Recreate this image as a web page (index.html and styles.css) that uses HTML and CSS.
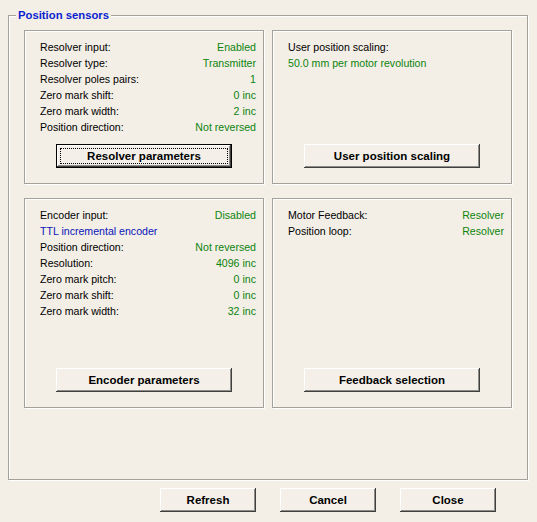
FILE: index.html
```html
<!DOCTYPE html>
<html lang="en">
<head>
    <meta charset="UTF-8">
    <meta name="viewport" content="width=device-width, initial-scale=1.0">
    <title>Position sensors</title>
    <link rel="stylesheet" href="styles.css">
</head>
<body>
    <div class="dialog">
        <div class="group">
            <span class="group-title">Position sensors</span>
            <div class="panels">
                <!-- Resolver -->
                <div class="panel">
                    <div class="row"><span>Resolver input:</span><span class="val">Enabled</span></div>
                    <div class="row"><span>Resolver type:</span><span class="val">Transmitter</span></div>
                    <div class="row"><span>Resolver poles pairs:</span><span class="val">1</span></div>
                    <div class="row"><span>Zero mark shift:</span><span class="val">0 inc</span></div>
                    <div class="row"><span>Zero mark width:</span><span class="val">2 inc</span></div>
                    <div class="row"><span>Position direction:</span><span class="val">Not reversed</span></div>
                    <button class="btn btn-wide btn-default">Resolver parameters</button>
                </div>

                <!-- User scaling -->
                <div class="panel">
                    <div class="row"><span>User position scaling:</span></div>
                    <div class="row"><span class="val">50.0 mm per motor revolution</span></div>
                    <button class="btn btn-wide">User position scaling</button>
                </div>

                <!-- Encoder -->
                <div class="panel">
                    <div class="row"><span>Encoder input:</span><span class="val">Disabled</span></div>
                    <div class="row"><span class="info">TTL incremental encoder</span></div>
                    <div class="row"><span>Position direction:</span><span class="val">Not reversed</span></div>
                    <div class="row"><span>Resolution:</span><span class="val">4096 inc</span></div>
                    <div class="row"><span>Zero mark pitch:</span><span class="val">0 inc</span></div>
                    <div class="row"><span>Zero mark shift:</span><span class="val">0 inc</span></div>
                    <div class="row"><span>Zero mark width:</span><span class="val">32 inc</span></div>
                    <button class="btn btn-wide">Encoder parameters</button>
                </div>

                <!-- Feedback -->
                <div class="panel">
                    <div class="row"><span>Motor Feedback:</span><span class="val">Resolver</span></div>
                    <div class="row"><span>Position loop:</span><span class="val">Resolver</span></div>
                    <button class="btn btn-wide">Feedback selection</button>
                </div>
            </div>
        </div>

        <div class="actions">
            <button class="btn">Refresh</button>
            <button class="btn">Cancel</button>
            <button class="btn">Close</button>
        </div>
    </div>
</body>
</html>
```

FILE: styles.css
```css
body {
    margin: 0;
    background-color: #f3eee6;
    font-family: "Liberation Sans", Arial, sans-serif;
    font-size: 10.6px;
    color: #000;
}
.dialog {
    padding: 15px 0 0 8px;
}
.group {
    position: relative;
    width: 520px;
    height: 465px;
    box-sizing: border-box;
    padding: 14px 15px 0 15px;
    border: 1px solid #a3a199;
    box-shadow: 1px 1px 0 #fff, inset 1px 1px 0 #fff;
}
.group-title {
    position: absolute;
    top: -8px;
    left: 7px;
    padding: 0 2px;
    line-height: 14px;
    background-color: #f3eee6;
    color: #0a1ecf;
    font-weight: bold;
    font-size: 11.3px;
}
.panels {
    display: grid;
    grid-template-columns: 240px 240px;
    grid-template-rows: 154px 210px;
    gap: 14px 8px;
}
.panel {
    display: flex;
    flex-direction: column;
    box-sizing: border-box;
    padding: 8px 7px 15px 15px;
    border: 1px solid #a3a199;
    box-shadow: 1px 1px 0 #fff, inset 1px 1px 0 #fff;
}
.row {
    display: flex;
    justify-content: space-between;
    height: 16px;
    line-height: 16px;
    white-space: nowrap;
}
.val {
    color: #0d840d;
}
.info {
    color: #0a14b8;
}
.btn {
    width: 96px;
    height: 24px;
    padding: 0;
    border: none;
    background-color: #f4f0e9;
    font-family: "Liberation Sans", Arial, sans-serif;
    font-size: 11.5px;
    font-weight: bold;
    color: #000;
    box-shadow: inset -1px -1px 0 #404040, inset 1px 1px 0 #fff, inset -2px -2px 0 #8f8d86;
    cursor: pointer;
}
.btn-wide {
    width: 176px;
    margin-top: auto;
    margin-left: 16px;
}
.btn-default {
    border: 1px solid #000;
    outline: 1px dotted #000;
    outline-offset: -5px;
}
.actions {
    display: flex;
    gap: 24px;
    margin-top: 8px;
    padding-left: 152px;
}
```
